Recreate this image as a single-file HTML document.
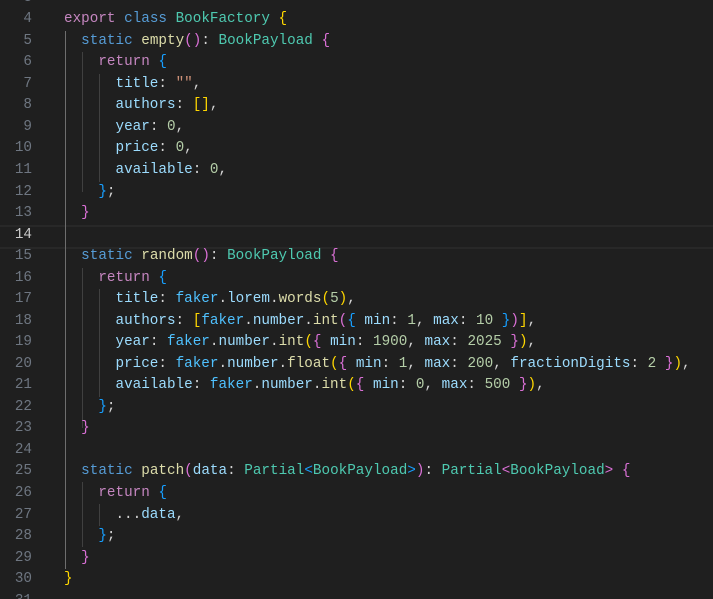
<!DOCTYPE html>
<html><head><meta charset="utf-8"><style>
html,body{margin:0;padding:0;background:#1f1f1f;width:713px;height:599px;overflow:hidden}
.ed{position:relative;width:713px;height:599px;font-family:"Liberation Mono",monospace;font-size:14.3px}
.ln{position:absolute;left:0;width:32px;text-align:right;color:#6e7681;height:21.54px;line-height:21.54px}
.ln.cur{color:#cccccc}
.code{position:absolute;left:64px;white-space:pre;color:#d4d4d4;height:21.54px;line-height:21.54px}
.g{position:absolute;width:1px;background:#404040}
.ga{background:#6e6e6e}
.k{color:#c586c0}.s{color:#569cd6}.t{color:#4ec9b0}.f{color:#dcdcaa}.p{color:#9cdcfe}.n{color:#b5cea8}.str{color:#ce9178}.v{color:#4fc1ff}
.b1{color:#ffd700}.b2{color:#da70d6}.b3{color:#179fff}
.hl{position:absolute;left:0;right:0;top:225px;height:20px;border-top:2px solid #282828;border-bottom:2px solid #282828}
</style></head><body><div class="ed">
<div class="hl"></div>
<div class="g ga" style="left:65px;top:31px;height:538px"></div>
<div class="g" style="left:82px;top:52px;height:140px"></div>
<div class="g" style="left:99px;top:74px;height:108px"></div>
<div class="g" style="left:82px;top:268px;height:160px"></div>
<div class="g" style="left:99px;top:289px;height:108px"></div>
<div class="g" style="left:82px;top:482px;height:65px"></div>
<div class="g" style="left:99px;top:504px;height:22px"></div>

<div class="ln" style="top:-12.3px">3</div>
<div class="ln" style="top:9.2px">4</div><div class="code" style="top:9.2px"><span class="k">export</span> <span class="s">class</span> <span class="t">BookFactory</span> <span class="b1">{</span></div>
<div class="ln" style="top:30.8px">5</div><div class="code" style="top:30.8px">  <span class="s">static</span> <span class="f">empty</span><span class="b2">()</span>: <span class="t">BookPayload</span> <span class="b2">{</span></div>
<div class="ln" style="top:52.3px">6</div><div class="code" style="top:52.3px">    <span class="k">return</span> <span class="b3">{</span></div>
<div class="ln" style="top:73.8px">7</div><div class="code" style="top:73.8px">      <span class="p">title</span>: <span class="str">""</span>,</div>
<div class="ln" style="top:95.4px">8</div><div class="code" style="top:95.4px">      <span class="p">authors</span>: <span class="b1">[]</span>,</div>
<div class="ln" style="top:116.9px">9</div><div class="code" style="top:116.9px">      <span class="p">year</span>: <span class="n">0</span>,</div>
<div class="ln" style="top:138.4px">10</div><div class="code" style="top:138.4px">      <span class="p">price</span>: <span class="n">0</span>,</div>
<div class="ln" style="top:160px">11</div><div class="code" style="top:160px">      <span class="p">available</span>: <span class="n">0</span>,</div>
<div class="ln" style="top:181.5px">12</div><div class="code" style="top:181.5px">    <span class="b3">}</span>;</div>
<div class="ln" style="top:203px">13</div><div class="code" style="top:203px">  <span class="b2">}</span></div>
<div class="ln cur" style="top:224.6px">14</div>
<div class="ln" style="top:246.1px">15</div><div class="code" style="top:246.1px">  <span class="s">static</span> <span class="f">random</span><span class="b2">()</span>: <span class="t">BookPayload</span> <span class="b2">{</span></div>
<div class="ln" style="top:267.6px">16</div><div class="code" style="top:267.6px">    <span class="k">return</span> <span class="b3">{</span></div>
<div class="ln" style="top:289.2px">17</div><div class="code" style="top:289.2px">      <span class="p">title</span>: <span class="v">faker</span>.<span class="p">lorem</span>.<span class="f">words</span><span class="b1">(</span><span class="n">5</span><span class="b1">)</span>,</div>
<div class="ln" style="top:310.7px">18</div><div class="code" style="top:310.7px">      <span class="p">authors</span>: <span class="b1">[</span><span class="v">faker</span>.<span class="p">number</span>.<span class="f">int</span><span class="b2">(</span><span class="b3">{</span> <span class="p">min</span>: <span class="n">1</span>, <span class="p">max</span>: <span class="n">10</span> <span class="b3">}</span><span class="b2">)</span><span class="b1">]</span>,</div>
<div class="ln" style="top:332.2px">19</div><div class="code" style="top:332.2px">      <span class="p">year</span>: <span class="v">faker</span>.<span class="p">number</span>.<span class="f">int</span><span class="b1">(</span><span class="b2">{</span> <span class="p">min</span>: <span class="n">1900</span>, <span class="p">max</span>: <span class="n">2025</span> <span class="b2">}</span><span class="b1">)</span>,</div>
<div class="ln" style="top:353.8px">20</div><div class="code" style="top:353.8px">      <span class="p">price</span>: <span class="v">faker</span>.<span class="p">number</span>.<span class="f">float</span><span class="b1">(</span><span class="b2">{</span> <span class="p">min</span>: <span class="n">1</span>, <span class="p">max</span>: <span class="n">200</span>, <span class="p">fractionDigits</span>: <span class="n">2</span> <span class="b2">}</span><span class="b1">)</span>,</div>
<div class="ln" style="top:375.3px">21</div><div class="code" style="top:375.3px">      <span class="p">available</span>: <span class="v">faker</span>.<span class="p">number</span>.<span class="f">int</span><span class="b1">(</span><span class="b2">{</span> <span class="p">min</span>: <span class="n">0</span>, <span class="p">max</span>: <span class="n">500</span> <span class="b2">}</span><span class="b1">)</span>,</div>
<div class="ln" style="top:396.8px">22</div><div class="code" style="top:396.8px">    <span class="b3">}</span>;</div>
<div class="ln" style="top:418.4px">23</div><div class="code" style="top:418.4px">  <span class="b2">}</span></div>
<div class="ln" style="top:439.9px">24</div>
<div class="ln" style="top:461.4px">25</div><div class="code" style="top:461.4px">  <span class="s">static</span> <span class="f">patch</span><span class="b2">(</span><span class="p">data</span>: <span class="t">Partial</span><span class="b3">&lt;</span><span class="t">BookPayload</span><span class="b3">&gt;</span><span class="b2">)</span>: <span class="t">Partial</span><span class="b2">&lt;</span><span class="t">BookPayload</span><span class="b2">&gt;</span> <span class="b2">{</span></div>
<div class="ln" style="top:483px">26</div><div class="code" style="top:483px">    <span class="k">return</span> <span class="b3">{</span></div>
<div class="ln" style="top:504.5px">27</div><div class="code" style="top:504.5px">      ...<span class="p">data</span>,</div>
<div class="ln" style="top:526px">28</div><div class="code" style="top:526px">    <span class="b3">}</span>;</div>
<div class="ln" style="top:547.6px">29</div><div class="code" style="top:547.6px">  <span class="b2">}</span></div>
<div class="ln" style="top:569.1px">30</div><div class="code" style="top:569.1px"><span class="b1">}</span></div>
<div class="ln" style="top:590.6px">31</div>
</div></body></html>
